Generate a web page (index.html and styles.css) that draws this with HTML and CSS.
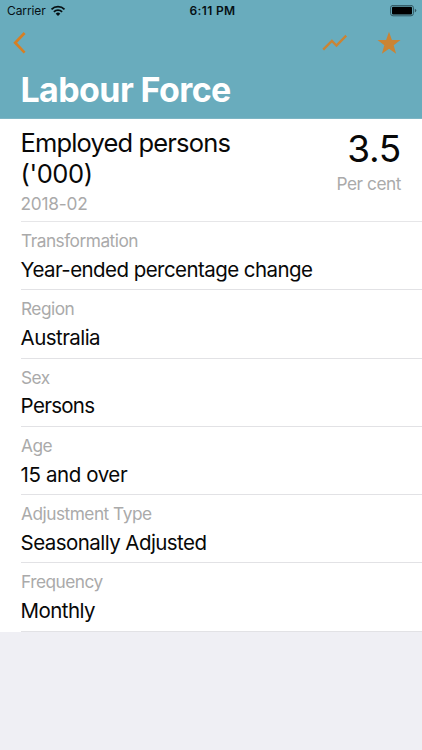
FILE: index.html
```html
<!DOCTYPE html>
<html lang="en">
<head>
<meta charset="utf-8">
<title>Labour Force</title>
<link rel="stylesheet" href="styles.css">
</head>
<body>
<header class="header">
  <div class="status">
    <div class="carrier"><span class="carrier-name">Carrier</span>
      <svg class="wifi" viewBox="0 0 16 12" width="16" height="12"><path d="M1.5 4.4A9.2 9.2 0 0 1 14.5 4.4M3.9 6.9A5.8 5.8 0 0 1 12.1 6.9" fill="none" stroke="#061014" stroke-width="1.8"/><path d="M8 11L5.7 8.7A3.3 3.3 0 0 1 10.3 8.7Z" fill="#061014"/></svg>
    </div>
    <span class="time">6:11 PM</span>
    <svg class="battery" viewBox="0 0 27 12" width="27" height="12"><rect x=".6" y=".4" width="22.8" height="10.4" rx="2.4" fill="none" stroke="#315863" stroke-width="1"/><rect x="2" y="1.8" width="20" height="7.6" rx="1" fill="#000"/><path d="M24.8 3.8Q26.3 4.3 26.3 5.6T24.8 7.4Z" fill="#315863"/></svg>
  </div>
  <nav class="nav">
    <svg class="back" viewBox="0 0 14 24" width="14" height="24"><path d="M12.6 2L3.2 11.8L12.6 21.6" fill="none" stroke="#d67f24" stroke-width="2.7"/></svg>
    <div class="actions">
      <svg class="chart" viewBox="0 0 26 18" width="26" height="18"><path d="M1.2 15.7L9.9 7L14.5 11.6L24.2 1.7" fill="none" stroke="#ca8434" stroke-width="2.4"/></svg>
      <svg class="star" viewBox="0 0 24 24" width="24" height="24"><path d="M12 .8L14.9 9H23.5L16.7 14.2L19.1 22.7L12 17.8L4.9 22.7L7.3 14.2L.5 9H9.1Z" fill="#ca8434"/></svg>
    </div>
  </nav>
  <h1 class="title">Labour Force</h1>
</header>
<main class="list">
  <section class="summary">
    <div class="series"><h2 class="series-name">Employed persons <span class="scale">('000)</span></h2><div class="period">2018-02</div></div>
    <div class="reading"><div class="amount">3.5</div><div class="unit">Per cent</div></div>
  </section>
  <section class="row"><div class="label">Transformation</div><div class="value">Year-ended percentage change</div></section>
  <section class="row"><div class="label">Region</div><div class="value">Australia</div></section>
  <section class="row"><div class="label">Sex</div><div class="value tight">Persons</div></section>
  <section class="row"><div class="label">Age</div><div class="value loose">15 and over</div></section>
  <section class="row"><div class="label">Adjustment Type</div><div class="value">Seasonally Adjusted</div></section>
  <section class="row"><div class="label">Frequency</div><div class="value">Monthly</div></section>
</main>
</body>
</html>
```
FILE: styles.css
```css
* { box-sizing: border-box; }
body { margin: 0; width: 422px; height: 750px; overflow: hidden; background: #efeff4; color: #080808; font-family: Inter, "Liberation Sans", sans-serif; }
.header { height: 119px; background: #69acbd; border-bottom: 1px solid #7db5c4; }
.status { display: grid; grid-template-columns: 1fr auto 1fr; align-items: center; height: 22px; padding: 0 5px 0 7px; font-size: 12px; line-height: 22px; color: #061014; }
.carrier { display: flex; align-items: center; gap: 4px; }
.carrier-name { letter-spacing: -.1px; }
.time { padding-left: 1px; font-weight: 600; letter-spacing: .35px; }
.battery { justify-self: end; }
.nav { display: flex; justify-content: space-between; align-items: center; height: 43px; padding: 0 21px 0 12px; }
.back { position: relative; top: -.5px; }
.actions { display: flex; align-items: center; gap: 29.5px; }
.chart, .star { position: relative; top: -.5px; }
.title { margin: 4px 0 0 20.5px; font-size: 34px; line-height: 42px; font-weight: 700; letter-spacing: -.6px; color: #fff; }
.list { background: #fff; }
.summary { display: flex; justify-content: space-between; height: 103.3px; margin-left: 21px; padding: 8px 21px 0 0; border-bottom: 1px solid #e6e6e8; }
.series { width: 240px; margin-left: -.5px; }
.series-name { margin: 0; font-size: 25.5px; line-height: 31.4px; font-weight: 400; letter-spacing: -.85px; }
.scale { letter-spacing: -.4px; }
.period { margin-top: 3px; font-size: 17.3px; line-height: 22px; letter-spacing: -.2px; color: #aaa; }
.reading { text-align: right; }
.amount { font-size: 37px; line-height: 44px; letter-spacing: -.3px; }
.unit { margin-top: 2px; font-size: 17.3px; line-height: 22px; letter-spacing: -.45px; color: #aaa; }
.row { height: 68.2px; margin-left: 21px; padding-top: 8px; border-bottom: 1px solid #e2e2e5; }
.row:last-child { height: 68.7px; }
.label { font-size: 17.3px; line-height: 22px; letter-spacing: -.5px; color: #aaa; }
.value { margin: 4.7px 0 0 -.4px; font-size: 20.5px; line-height: 26px; letter-spacing: -.56px; }
.tight { letter-spacing: -.7px; }
.loose { letter-spacing: -.42px; }
```
